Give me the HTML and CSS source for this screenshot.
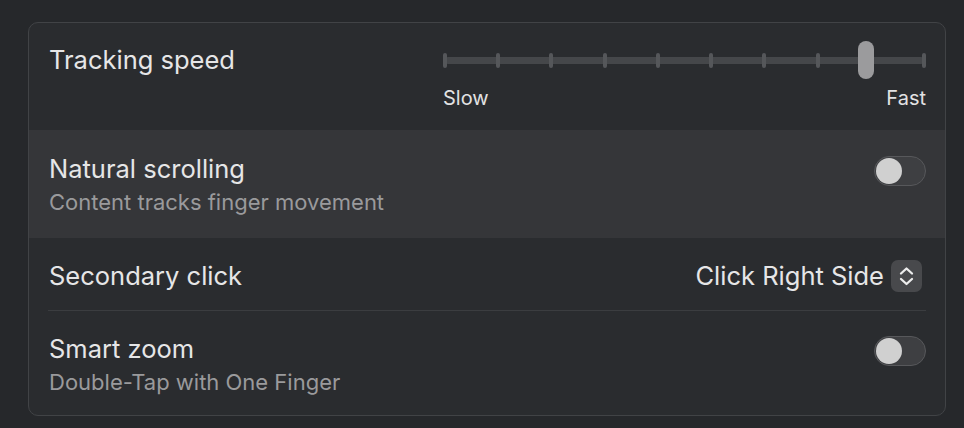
FILE: index.html
```html
<!DOCTYPE html>
<html lang="en">
<head>
<meta charset="utf-8">
<title>Trackpad</title>
<link rel="stylesheet" href="styles.css">
</head>
<body>
<div class="card">
  <div class="row row-slider">
    <div class="title title-top">Tracking speed</div>
    <div class="slider">
      <div class="rail">
        <span class="tick"></span><span class="tick"></span><span class="tick"></span><span class="tick"></span><span class="tick"></span><span class="tick"></span><span class="tick"></span><span class="tick"></span><span class="tick"></span><span class="tick"></span>
        <div class="thumb"></div>
      </div>
      <div class="slider-labels"><span>Slow</span><span>Fast</span></div>
    </div>
  </div>
  <div class="row row-toggle highlight">
    <div class="text">
      <div class="title">Natural scrolling</div>
      <div class="sub">Content tracks finger movement</div>
    </div>
    <div class="toggle"><span class="knob"></span></div>
  </div>
  <div class="row row-popup">
    <div class="title">Secondary click</div>
    <div class="popup">
      <span class="popup-value">Click Right Side</span>
      <span class="stepper">
        <svg width="31" height="32" viewBox="0 0 31 32"><path d="M10 13.5 L15.5 8.5 L21 13.5" fill="none" stroke="#ececec" stroke-width="2.3" stroke-linecap="round" stroke-linejoin="round"/><path d="M10 19 L15.5 24 L21 19" fill="none" stroke="#ececec" stroke-width="2.3" stroke-linecap="round" stroke-linejoin="round"/></svg>
      </span>
    </div>
  </div>
  <div class="sep"></div>
  <div class="row row-toggle last">
    <div class="text">
      <div class="title">Smart zoom</div>
      <div class="sub">Double-Tap with One Finger</div>
    </div>
    <div class="toggle"><span class="knob"></span></div>
  </div>
</div>
</body>
</html>
```
FILE: styles.css
```css
* { box-sizing: border-box; }
html, body { margin: 0; padding: 0; }
body {
  background: #26282b;
  font-family: Inter, "Noto Sans", "Liberation Sans", sans-serif;
  color: #e6e6e7;
  padding: 22px 18px 0 28px;
  width: 964px;
  height: 428px;
  overflow: hidden;
}
.card {
  width: 918px;
  height: 394px;
  background: #2a2c2f;
  border: 1px solid #414346;
  border-radius: 10px;
  overflow: hidden;
}
.row {
  display: flex;
  justify-content: space-between;
  padding: 0 19px 0 20px;
}
.title {
  font-size: 25.5px;
  line-height: 30px;
  color: #e6e6e7;
}
.sub {
  font-size: 22px;
  line-height: 26px;
  color: #9a9a9c;
  margin-top: 5px;
}
.row-slider {
  height: 107px;
  align-items: flex-start;
}
.title-top { margin-top: 22px; }
.slider {
  width: 483px;
  margin-top: 17px;
}
.rail {
  position: relative;
  height: 40px;
  display: flex;
  align-items: center;
  justify-content: space-between;
}
.rail::before {
  content: "";
  position: absolute;
  left: 2px;
  right: 2px;
  top: 17px;
  height: 7px;
  background: #45474a;
  border-radius: 3px;
}
.tick {
  position: relative;
  width: 4px;
  height: 15px;
  border-radius: 2px;
  background: #55575a;
}
.thumb {
  position: absolute;
  left: 415px;
  top: 1px;
  width: 16px;
  height: 38px;
  border-radius: 8px;
  background: #9b9b9d;
}
.slider-labels {
  display: flex;
  justify-content: space-between;
  font-size: 20px;
  line-height: 24px;
  margin-top: 6px;
  color: #e2e2e3;
}
.row-toggle {
  height: 108px;
  align-items: flex-start;
  padding-top: 24px;
}
.row-toggle .toggle { margin-top: 2px; }
.highlight { background: #353639; }
.last { height: 104px; padding-top: 23px; }
.toggle {
  width: 52px;
  height: 30px;
  border-radius: 15px;
  background: #3e3f42;
  border: 1px solid #57585b;
  padding: 1px;
  display: flex;
}
.knob {
  width: 26px;
  height: 26px;
  border-radius: 50%;
  background: #d0d0d0;
}
.row-popup {
  height: 72px;
  align-items: center;
}
.row-popup > .title { margin-top: 3px; }
.popup {
  display: flex;
  align-items: center;
  gap: 7px;
  margin-top: 3px;
  margin-right: 4px;
}
.popup-value {
  font-size: 25.5px;
  line-height: 30px;
  color: #e6e6e7;
}
.stepper {
  display: flex;
  width: 31px;
  height: 32px;
  border-radius: 7px;
  background: #48494c;
}
.sep {
  height: 1px;
  margin: 0 19px 0 19px;
  background: #3b3d40;
}
```
